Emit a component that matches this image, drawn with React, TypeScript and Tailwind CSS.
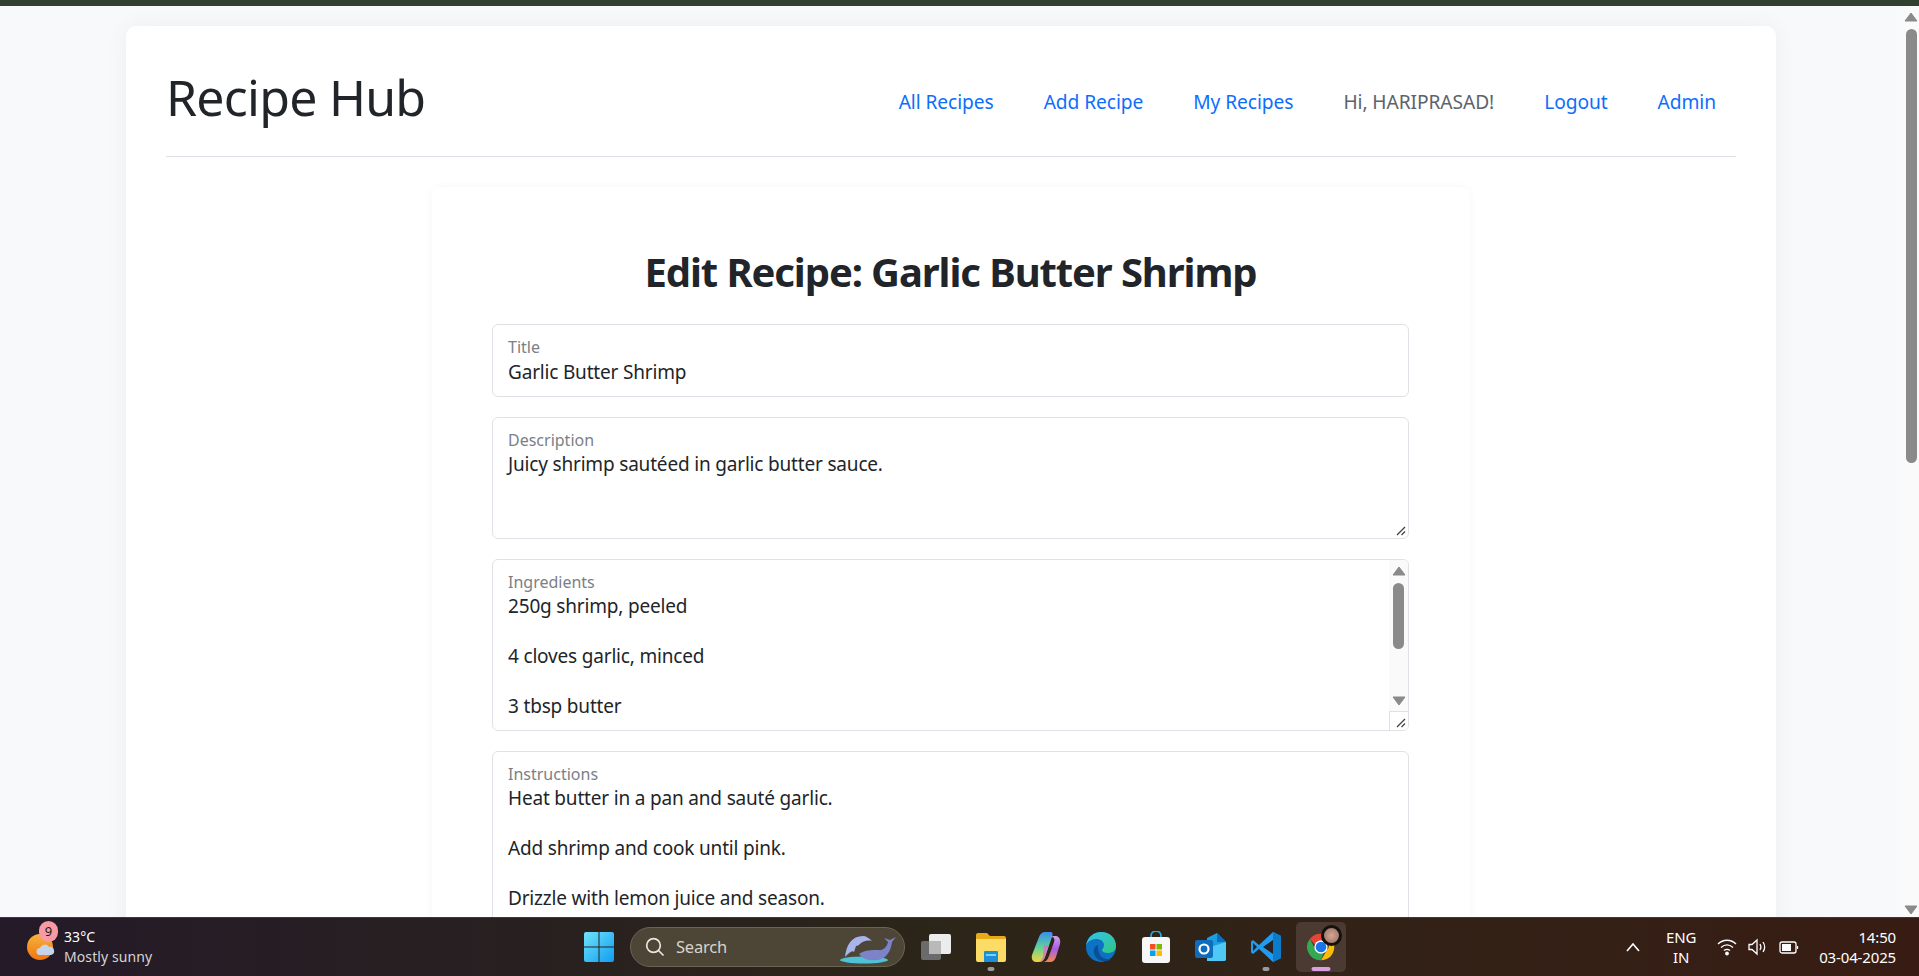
import React from "react";

const font = { fontFamily: '"Noto Sans", "Open Sans", sans-serif' };

function Grip() {
  return (
    <svg className="absolute bottom-[1px] right-[1px]" width="12" height="12" viewBox="0 0 12 12">
      <path d="M2 10 L10 2 M6.5 10 L10 6.5" stroke="#444" strokeWidth="1.3" fill="none" />
    </svg>
  );
}

function Arrow({ up }: { up?: boolean }) {
  return (
    <svg width="14" height="10" viewBox="0 0 14 10">
      <path d={up ? "M7 1 L13 9 H1 Z" : "M1 1 H13 L7 9 Z"} fill="#8a8a8a" stroke="#8a8a8a" strokeLinejoin="round" />
    </svg>
  );
}

function Field({ label, lines, h, labelGap, grip, scroll }: { label: string; lines: string[]; h: string; labelGap: string; grip?: boolean; scroll?: boolean }) {
  return (
    <div className={`relative shrink-0 rounded-[6px] border border-[#dee2e6] bg-white pl-[15px] pt-[11px] overflow-hidden ${h}`}>
      <div className={`text-[16px] leading-[22px] text-[#7b8087] ${labelGap}`}>{label}</div>
      {lines.map((l, i) => (
        <div key={i} className="h-[25px] text-[19px] leading-[25px] tracking-[-0.18px] text-[#212529] whitespace-nowrap">{l}</div>
      ))}
      {grip && <Grip />}
      {scroll && (
        <>
          <div className="absolute right-0 top-0 bottom-0 w-[19px] bg-[#fafafa] flex flex-col items-center pt-[6px]">
            <Arrow up />
            <div className="mt-[7px] h-[66px] w-[11px] rounded-[6px] bg-[#8a8a8a]" />
            <div className="mt-[47px]"><Arrow /></div>
          </div>
          <div className="absolute right-0 bottom-0 h-[19px] w-[19px] border-l border-t border-[#dee2e6] bg-white" />
          <Grip />
        </>
      )}
    </div>
  );
}

function NavLink({ children, plain }: { children: React.ReactNode; plain?: boolean }) {
  return <span className={`text-[19.2px] tracking-[-0.08px] whitespace-nowrap ${plain ? "text-[#5c636a]" : "text-[#0d6efd]"}`}>{children}</span>;
}

function Chrome() {
  return (
    <svg width="32" height="32" viewBox="0 0 48 48">
      <path d="M24 4a20 20 0 0 1 17.3 10H24a10 10 0 0 0-9.4 6.6L7.4 11.7A20 20 0 0 1 24 4Z" fill="#ea4335" />
      <path d="M41.3 14A20 20 0 0 1 24 44l8.7-15A10 10 0 0 0 32.6 14Z" fill="#fbbc04" />
      <path d="M24 44A20 20 0 0 1 7.4 11.7l8.6 17.2A10 10 0 0 0 28 33.2L24 44Z" fill="#34a853" />
      <circle cx="24" cy="24" r="10" fill="#fff" />
      <circle cx="24" cy="24" r="8" fill="#1a73e8" />
    </svg>
  );
}

function Explorer() {
  return (
    <svg width="32" height="30" viewBox="0 0 32 30">
      <path d="M1 3a2 2 0 0 1 2-2h9l3 3h14a2 2 0 0 1 2 2v4H1Z" fill="#e9a91a" />
      <path d="M1 7h30v21a2 2 0 0 1-2 2H3a2 2 0 0 1-2-2Z" fill="#fbdc66" />
      <path d="M10 19h12a1 1 0 0 1 1 1v10H9V20a1 1 0 0 1 1-1Z" fill="#1d8fd8" />
      <path d="M11 22h10v2H11Z" fill="#7fd0f5" />
    </svg>
  );
}

function Copilot() {
  return (
    <svg width="30" height="32" viewBox="0 0 30 32">
      <defs>
        <linearGradient id="cpa" x1="0" y1="0" x2="0" y2="1"><stop offset="0" stopColor="#3a8cf0" /><stop offset="0.5" stopColor="#5ed29b" /><stop offset="1" stopColor="#f6d33d" /></linearGradient>
        <linearGradient id="cpb" x1="0" y1="0" x2="0" y2="1"><stop offset="0" stopColor="#d0a0f0" /><stop offset="0.5" stopColor="#a95be8" /><stop offset="1" stopColor="#f6884a" /></linearGradient>
      </defs>
      <path d="M14 1h5c3 0 3 2 2 5l-7 20c-1 3-3 5-6 5H5c-3 0-5-3-4-7L8 6c1-3 3-5 6-5Z" fill="url(#cpa)" />
      <path d="M20 6c0 0 1-1 3-1h2c3 0 5 4 4 8l-4 13c-1 3-3 5-6 5h-7c3 0 5-3 6-6l5-14c1-3 0-5-3-5Z" fill="url(#cpb)" />
      <path d="M13 14h5l-4 12c-1 2-2 4-4 5h-2c2-1 3-3 4-5Z" fill="#d96bc8" opacity="0.8" />
    </svg>
  );
}

function Edge() {
  return (
    <svg width="32" height="32" viewBox="0 0 32 32">
      <defs>
        <linearGradient id="eda" x1="0" y1="0" x2="1" y2="1"><stop offset="0" stopColor="#35c1f1" /><stop offset="1" stopColor="#2fc77f" /></linearGradient>
      </defs>
      <circle cx="16" cy="16" r="15" fill="#0c72c4" />
      <path d="M1 15C2 6 9 1 16 1c9 0 15 6 15 14 0 5-4 7-8 7-3 0-6-1-6-3 0-1 2-2 2-5 0-4-4-6-8-6-5 0-9 3-10 7Z" fill="url(#eda)" />
      <path d="M13 14c-3 1-5 4-4 8 1 5 6 9 12 8 2 0 4-1 5-2-5 1-9-1-11-4-2-4-2-7-2-10Z" fill="#0a4f96" />
    </svg>
  );
}

function Store() {
  return (
    <svg width="30" height="32" viewBox="0 0 30 32">
      <path d="M10 7V5a5 5 0 0 1 10 0v2" fill="none" stroke="#2aa5de" strokeWidth="1.8" />
      <rect x="1" y="6" width="28" height="26" rx="3" fill="#f7f7f7" />
      <rect x="9" y="13" width="5.5" height="5.5" fill="#f25022" />
      <rect x="15.5" y="13" width="5.5" height="5.5" fill="#7fba00" />
      <rect x="9" y="19.5" width="5.5" height="5.5" fill="#00a4ef" />
      <rect x="15.5" y="19.5" width="5.5" height="5.5" fill="#ffb900" />
    </svg>
  );
}

function Outlook() {
  return (
    <svg width="32" height="30" viewBox="0 0 32 30">
      <path d="M12 6 L22 1 L31 10 V27 a2 2 0 0 1-2 2 H12 Z" fill="#1b9de2" />
      <path d="M22 1 L31 10 H22 Z" fill="#0f6cbd" />
      <path d="M12 16 L31 10 V27 a2 2 0 0 1-2 2 H12 Z" fill="#50c8f5" />
      <rect x="0" y="8" width="18" height="18" rx="2" fill="#0f6cbd" />
      <circle cx="9" cy="17" r="4.5" fill="none" stroke="#fff" strokeWidth="2.2" />
    </svg>
  );
}

function VSCode() {
  return (
    <svg width="32" height="32" viewBox="0 0 32 32">
      <path d="M23 1 L31 5 V27 L23 31 L9 18 L3 23 L1 21.5 V10.5 L3 9 L9 14 Z" fill="#1f9cf0" />
      <path d="M23 1 L31 5 V27 L23 31 Z" fill="#0a7cc9" />
      <path d="M23 9 L13 16 L23 23 Z" fill="#2b2120" />
      <path d="M3 12 L7 16 L3 20 Z" fill="#2b2120" />
    </svg>
  );
}

function Whales() {
  return (
    <svg width="62" height="36" viewBox="0 0 60 36">
      <ellipse cx="24" cy="31" rx="24" ry="3.5" fill="#4ec3d8" />
      <path d="M5 28C6 16 12 7 23 7c3 0 6 2 9 5-5-1-8 0-11 2-2 2-3 3-5 3l-2 6c-2-2-5 1-9 5Z" fill="#a8b4ea" />
      <path d="M19 25c5-4 13-4 19-4 5 1 9-3 10-8l-4-4 6 2 6-3-4 5c-1 9-6 17-14 18-7 1-15 0-19-6Z" fill="#7d83c9" />
    </svg>
  );
}

function TaskIcon({ children }: { children: React.ReactNode }) {
  return <div className="relative mr-[5px] flex h-[50px] w-[50px] shrink-0 items-center justify-center">{children}</div>;
}

function Dot({ color = "bg-[#9b9b9b]", w = "w-[7px]" }: { color?: string; w?: string }) {
  return <div className={`absolute bottom-[1px] left-1/2 h-[4px] -translate-x-1/2 rounded-full ${w} ${color}`} />;
}

export default function App() {
  return (
    <div className="flex h-[976px] w-full flex-col overflow-hidden bg-[#f8f9fa]" style={font}>
      <div className="h-[6px] shrink-0 bg-[#32402f]" />
      <div className="flex min-h-0 flex-1">
        <main className="min-w-0 flex-1 overflow-hidden pl-[126px] pr-[127px] pt-[20px]">
          <div className="h-[1200px] rounded-t-[10px] bg-white px-10 shadow-[0_0_24px_rgba(0,0,0,0.05)]">
            <header className="flex h-[131px] items-center justify-between border-b border-[#dee2e6] pt-3">
              <h1 className="text-[50px] font-normal tracking-[-0.75px] text-[#212529]">Recipe Hub</h1>
              <nav className="mt-[10px] flex gap-[50px] pr-5">
                <NavLink>All Recipes</NavLink>
                <NavLink>Add Recipe</NavLink>
                <NavLink>My Recipes</NavLink>
                <NavLink plain>Hi, HARIPRASAD!</NavLink>
                <NavLink>Logout</NavLink>
                <NavLink>Admin</NavLink>
              </nav>
            </header>
            <section className="mx-auto mt-[30px] w-[1038px] rounded-[8px] bg-white pl-[60px] pr-[61px] pt-[59px] shadow-[0_0_10px_rgba(0,0,0,0.04)]">
              <h2 className="mb-[26px] text-center text-[40px] leading-[52px] font-bold tracking-[-1.1px] text-[#212529]">Edit Recipe: Garlic Butter Shrimp</h2>
              <div className="flex flex-col gap-5">
                <Field label="Title" lines={["Garlic Butter Shrimp"]} h="h-[73px]" labelGap="mb-[2px]" />
                <Field label="Description" lines={["Juicy shrimp sautéed in garlic butter sauce."]} h="h-[122px]" labelGap="mb-[1px]" grip />
                <Field label="Ingredients" lines={["250g shrimp, peeled", "", "4 cloves garlic, minced", "", "3 tbsp butter"]} h="h-[172px]" labelGap="mb-[1px]" scroll />
                <Field label="Instructions" lines={["Heat butter in a pan and sauté garlic.", "", "Add shrimp and cook until pink.", "", "Drizzle with lemon juice and season."]} h="h-[180px]" labelGap="mb-[1px]" />
              </div>
            </section>
          </div>
        </main>
        <div className="flex w-4 shrink-0 flex-col items-center bg-[#fafafa] pt-[6px]">
          <Arrow up />
          <div className="mt-[7px] h-[434px] w-[11px] rounded-[6px] bg-[#8a8a8a]" />
          <div className="mt-auto mb-[2px]"><Arrow /></div>
        </div>
      </div>
      <footer className="relative flex h-[59px] shrink-0 items-center border-t border-[#3a3a3a] bg-gradient-to-r from-[#241a28] via-[#2c2518] to-[#381c14] text-white">
        <div className="relative ml-[27px] flex w-[280px] shrink-0 items-center">
          <svg width="28" height="28" viewBox="0 0 28 28">
            <defs><linearGradient id="sun" x1="0" y1="0" x2="0" y2="1"><stop offset="0" stopColor="#f6b23c" /><stop offset="1" stopColor="#f2760f" /></linearGradient></defs>
            <circle cx="13" cy="14" r="13" fill="url(#sun)" />
            <path d="M13 22a3.5 3.5 0 0 1 0-7 5 5 0 0 1 9-1 4 4 0 0 1 2 8Z" fill="#c5d4ea" />
          </svg>
          <div className="absolute left-[12px] top-[-6px] flex h-[21px] w-[19px] items-center justify-center rounded-full bg-[#f79aa3] text-[13px] text-[#1a1a1a]">9</div>
          <div className="ml-[9px] text-[14px] leading-[20px] tracking-[0.1px]">
            <div>33°C</div>
            <div className="text-[#d8d4d4]">Mostly sunny</div>
          </div>
        </div>
        <svg className="ml-[277px] shrink-0" width="30" height="30" viewBox="0 0 30 30">
          <defs><linearGradient id="win" x1="0" y1="0" x2="1" y2="1"><stop offset="0" stopColor="#6fe3fa" /><stop offset="1" stopColor="#0f9df0" /></linearGradient></defs>
          <path d="M0 2a2 2 0 0 1 2-2h12.5v14.5H0Z M15.5 0H28a2 2 0 0 1 2 2v12.5H15.5Z M0 15.5h14.5V30H2a2 2 0 0 1-2-2Z M15.5 15.5H30V28a2 2 0 0 1-2 2H15.5Z" fill="url(#win)" />
        </svg>
        <div className="ml-[16px] flex h-[40px] w-[275px] shrink-0 items-center overflow-hidden rounded-full border border-[#6a6453] bg-[#4d4637] pl-[14px] pr-[3px]">
          <svg width="20" height="20" viewBox="0 0 20 20" fill="none" stroke="#e8e6e0" strokeWidth="1.7"><circle cx="8.5" cy="8.5" r="6.8" /><path d="M13.5 13.5 L18.5 18.5" /></svg>
          <span className="ml-[11px] text-[16.5px] tracking-[-0.2px] text-[#d8d4ca]">Search</span>
          <div className="ml-auto"><Whales /></div>
        </div>
        <svg className="ml-[15px] shrink-0" width="32" height="28" viewBox="0 0 32 28">
          <rect x="1" y="8" width="20" height="19" rx="2" fill="#6b6b6b" />
          <rect x="9" y="1" width="22" height="20" rx="2" fill="#ececec" />
          <rect x="9" y="8" width="12" height="13" fill="#b9b9b9" />
        </svg>
        <div className="ml-[14px] flex">
          <TaskIcon><Explorer /><Dot /></TaskIcon>
          <TaskIcon><Copilot /></TaskIcon>
          <TaskIcon><Edge /></TaskIcon>
          <TaskIcon><Store /></TaskIcon>
          <TaskIcon><Outlook /></TaskIcon>
          <TaskIcon><VSCode /><Dot /></TaskIcon>
          <div className="relative flex h-[50px] w-[50px] shrink-0 items-center justify-center rounded-[5px] bg-[#4a3a32]">
            <Chrome />
            <div className="absolute right-[4px] top-[3px] h-[21px] w-[21px] rounded-full border-[3px] border-[#15110f] bg-[radial-gradient(circle,#d8a592,#8d6f63)]" />
            <Dot color="bg-[#d8a0e0]" w="w-[19px]" />
          </div>
        </div>
        <div className="ml-auto flex items-center pr-[23px] text-[15px] leading-[20px] tracking-[-0.15px]">
          <svg width="16" height="10" viewBox="0 0 16 10" fill="none" stroke="#fff" strokeWidth="1.6"><path d="M2 9 L8 2 L14 9" /></svg>
          <div className="ml-[25px] text-center"><div>ENG</div><div>IN</div></div>
          <svg className="ml-[21px]" width="20" height="18" viewBox="0 0 20 18" fill="none" stroke="#fff" strokeWidth="1.4"><path d="M1 6 C6 1 14 1 19 6 M4 9.5 C8 6 12 6 16 9.5 M7 12.5 C9 11 11 11 13 12.5" /><circle cx="10" cy="15.5" r="1.2" fill="#fff" /></svg>
          <svg className="ml-[11px]" width="20" height="18" viewBox="0 0 20 18" fill="none" stroke="#fff" strokeWidth="1.3"><path d="M1 6.5h3L9 2v14L4 11.5H1Z" /><path d="M12 6c1.2 2 1.2 4 0 6 M15 4c2 3 2 7 0 10" /></svg>
          <svg className="ml-[11px]" width="20" height="16" viewBox="0 0 20 16" fill="none" stroke="#fff" strokeWidth="1.3"><rect x="1" y="3" width="16" height="11" rx="2" /><path d="M18.5 7v3" /><rect x="3" y="5" width="9" height="7" fill="#fff" stroke="none" /></svg>
          <div className="ml-5 text-right"><div>14:50</div><div>03-04-2025</div></div>
        </div>
      </footer>
    </div>
  );
}
